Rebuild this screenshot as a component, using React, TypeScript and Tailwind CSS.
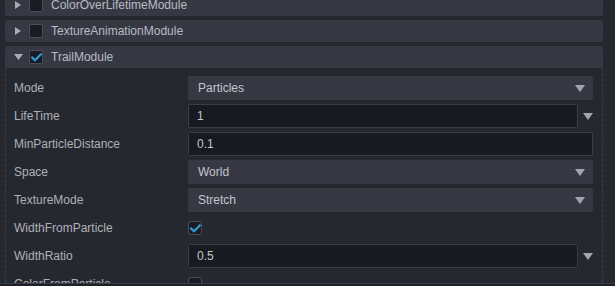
import React from "react";

const font = { fontFamily: '"Liberation Sans", Arial, sans-serif' };

function Tri({ dir }: { dir: "right" | "down" }) {
  return dir === "right" ? (
    <svg width="6" height="8" viewBox="0 0 6 8" className="shrink-0">
      <path d="M0 0 L6 4 L0 8 Z" fill="#a9abb3" />
    </svg>
  ) : (
    <svg width="9" height="6" viewBox="0 0 9 6" className="shrink-0">
      <path d="M0 0 L9 0 L4.5 6 Z" fill="#a9abb3" />
    </svg>
  );
}

function Check({ checked }: { checked: boolean }) {
  return (
    <div className="w-[14px] h-[14px] rounded-[2px] border border-[#4a4d58] bg-[#1a1c24] flex items-center justify-center shrink-0">
      {checked && (
        <svg width="11" height="9" viewBox="0 0 11 9">
          <path d="M1.2 4.6 L4 7.3 L9.8 1.5" stroke="#2d9fd3" strokeWidth="2.2" fill="none" strokeLinecap="square" />
        </svg>
      )}
    </div>
  );
}

function Header({ title, open, checked, className = "" }: { title: string; open: boolean; checked: boolean; className?: string }) {
  return (
    <div className={`h-[22px] bg-[#363944] rounded-[3px] flex items-center ${className}`}>
      <div className="w-[24px] flex items-center justify-center pl-[2px]">
        <Tri dir={open ? "down" : "right"} />
      </div>
      <Check checked={checked} />
      <span className="ml-[8px] text-[12px] text-[#b9bbc2]">{title}</span>
    </div>
  );
}

function DropTri() {
  return (
    <svg width="10" height="7" viewBox="0 0 10 7" className="shrink-0">
      <path d="M0 0 L10 0 L5 7 Z" fill="#a3a6ae" />
    </svg>
  );
}

function Select({ value }: { value: string }) {
  return (
    <div className="h-[24px] flex-1 bg-[#363944] rounded-[2px] flex items-center pl-[10px] pr-[8px]">
      <span className="flex-1 text-[12px] text-[#c3c5cb]">{value}</span>
      <DropTri />
    </div>
  );
}

function NumInput({ value, spin }: { value: string; spin?: boolean }) {
  return (
    <div className="flex-1 flex items-center">
      <div className="h-[24px] flex-1 bg-[#181a22] border border-[#3a3d48] rounded-[2px] flex items-center pl-[8px]">
        <span className="text-[12px] text-[#c3c5cb]">{value}</span>
      </div>
      {spin && (
        <div className="w-[15px] flex justify-end">
          <DropTri />
        </div>
      )}
    </div>
  );
}

function Row({ label, children }: { label: string; children: React.ReactNode }) {
  return (
    <div className="h-[28px] flex items-center">
      <div className="w-[174px] text-[12px] text-[#aeb0b8] shrink-0">{label}</div>
      <div className="flex-1 flex items-center">{children}</div>
    </div>
  );
}

export default function App() {
  return (
    <div className="w-[615px] h-[286px] overflow-hidden bg-[#262830] relative" style={font}>
      <div className="mt-[-6px] pl-[5px] pr-[12px] flex flex-col">
        <Header title="ColorOverLifetimeModule" open={false} checked={false} className="mb-[4px]" />
        <Header title="TextureAnimationModule" open={false} checked={false} className="mb-[4px]" />
        <Header title="TrailModule" open={true} checked={true} className="rounded-b-none" />
        <div className="border-l border-r border-dashed border-[#3d4049] pl-[8px] pr-[9px] pt-[6px] h-[215px]">
          <Row label="Mode"><Select value="Particles" /></Row>
          <Row label="LifeTime"><NumInput value="1" spin /></Row>
          <Row label="MinParticleDistance"><NumInput value="0.1" /></Row>
          <Row label="Space"><Select value="World" /></Row>
          <Row label="TextureMode"><Select value="Stretch" /></Row>
          <Row label="WidthFromParticle"><Check checked={true} /></Row>
          <Row label="WidthRatio"><NumInput value="0.5" spin /></Row>
          <Row label="ColorFromParticle"><Check checked={false} /></Row>
        </div>
      </div>
      <div className="absolute left-0 right-0 top-[283px] h-[1px] bg-[#3a3d47]" />
      <div className="absolute left-0 right-0 top-[284px] h-[2px] bg-[#1f2128]" />
    </div>
  );
}
